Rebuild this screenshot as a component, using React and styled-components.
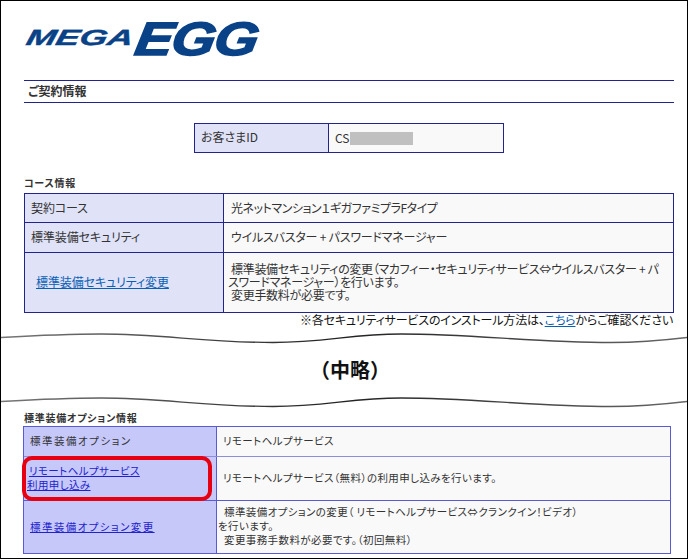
import React from "react";
import styled, { createGlobalStyle } from "styled-components";

const Global = createGlobalStyle`
  html, body { margin: 0; padding: 0; background: #fff; }
  * { box-sizing: border-box; }
`;
const Frame = styled.div`
  position: relative;
  width: 688px;
  height: 559px;
  overflow: hidden;
  border: 1px solid #000;
  background: #fff;
  font-family: "Noto Sans CJK JP", "Noto Sans", sans-serif;
  font-feature-settings: "palt";
  font-size: 12px;
  color: #333;
`;
const Logo = styled.div`
  height: 41px;
  margin: 17px 0 0 23px;
  display: flex;
  align-items: flex-end;
  font-family: "Liberation Sans", sans-serif;
  font-style: italic;
  font-weight: 700;
  color: #0a4287;
  line-height: 1;
`;
const LogoMega = styled.span`
  font-size: 22px;
  transform: scaleX(1.62) skewX(-8deg);
  transform-origin: left bottom;
  width: 108px;
  margin-bottom: 10px;
  -webkit-text-stroke: 0.4px #0a4287;
`;
const LogoEgg = styled.span`
  font-size: 47px;
  transform: scaleX(1.2) skewX(-8deg);
  transform-origin: left bottom;
  letter-spacing: -1px;
  margin-bottom: -3px;
  -webkit-text-stroke: 1.5px #0a4287;
`;
const TitleBar = styled.h1`
  margin: 21px 13px 0 23px;
  height: 23px;
  border-top: 1px solid #23238e;
  border-bottom: 1px solid #23238e;
  padding-left: 4px;
  font-size: 12px;
  line-height: 19px;
  font-weight: 700;
  color: #333;
`;
const IdTable = styled.div`
  width: 310px;
  height: 30px;
  margin: 20px 0 0 193px;
  display: grid;
  grid-template-columns: 134px 1fr;
  border: 1px solid #23238e;
`;
const IdLabel = styled.div`
  background: #e0e2f7;
  border-right: 1px solid #23238e;
  padding-left: 6px;
  line-height: 26px;
`;
const IdValue = styled.div`
  background: #f9f9f9;
  padding-left: 6px;
  line-height: 26px;
  display: flex;
  align-items: center;
`;
const Masked = styled.span`
  width: 63px;
  height: 13px;
  background: #c0c0c0;
  margin: 0 0 0 1px;
`;
const SectionHeading = styled.h2`
  margin: ${(p) => p.$top}px 0 0 ${(p) => p.$left}px;
  height: 14px;
  font-size: 10px;
  line-height: 14px;
  font-weight: 700;
  letter-spacing: ${(p) => p.$spacing}px;
  color: #333;
`;
const InfoTable = styled.div`
  width: ${(p) => p.$width}px;
  margin: ${(p) => p.$top}px 0 0 ${(p) => p.$left}px;
  border: 1px solid ${(p) => p.$line};
  border-bottom: 0;
  font-size: ${(p) => p.$size}px;
  letter-spacing: ${(p) => p.$spacing}px;
`;
const Row = styled.div`
  display: grid;
  grid-template-columns: ${(p) => p.$label}px 1fr;
  height: ${(p) => p.$height}px;
  border-bottom: 1px solid ${(p) => p.$line};
`;
const Label = styled.div`
  position: relative;
  display: flex;
  flex-direction: column;
  justify-content: center;
  align-items: flex-start;
  background: ${(p) => p.$bg};
  border-right: 1px solid ${(p) => p.$line};
  padding: 0 0 2px ${(p) => p.$pad}px;
`;
const Value = styled.div`
  display: flex;
  flex-direction: column;
  justify-content: center;
  background: #f9f9f9;
  padding: 0 0 2px ${(p) => p.$pad}px;
  letter-spacing: ${(p) => p.$spacing ?? 0.4}px;
`;
const Line = styled.div`
  line-height: ${(p) => p.$lh || 13}px;
  white-space: nowrap;
  padding-left: ${(p) => p.$indent || 0}px;
  ${(p) => (p.$spacing !== undefined ? `letter-spacing: ${p.$spacing}px;` : "")}
`;
const Link = styled.a`
  color: ${(p) => p.$color || "#0a5fb4"};
  text-decoration: underline;
  line-height: ${(p) => p.$lh || 15}px;
  white-space: nowrap;
  margin-left: ${(p) => p.$indent || 0}px;
  ${(p) => (p.$spacing !== undefined ? `letter-spacing: ${p.$spacing}px;` : "")}
`;
const Note = styled.div`
  width: 649px;
  margin: -1px 0 0 23px;
  height: 14px;
  text-align: right;
  line-height: 14px;
  letter-spacing: -0.17px;
  color: #111;
  white-space: nowrap;
`;
const WaveSvg = styled.svg`
  display: block;
  width: 686px;
  height: 11px;
  margin-top: ${(p) => p.$top}px;
`;
const Omitted = styled.div`
  margin-top: 7px;
  height: 38px;
  line-height: 38px;
  text-align: center;
  font-size: 20px;
  font-weight: 700;
  font-feature-settings: normal;
  color: #111;
  padding-left: 12px;
`;
const Highlight = styled.div`
  position: absolute;
  left: -2px;
  top: -1px;
  width: 190px;
  height: 45px;
  border: 4px solid #e60012;
  border-radius: 10px;
`;

const Wave = ({ top, id }) => (
  <WaveSvg $top={top} viewBox="0 0 686 11">
    <defs>
      <linearGradient id={id} x1="0" x2="1" y1="0" y2="0">
        <stop offset="0" stopColor="#777" />
        <stop offset="0.5" stopColor="#222" />
        <stop offset="1" stopColor="#666" />
      </linearGradient>
    </defs>
    <path
      d="M0 4.5 C35 2.5 65 1 100 1 C160 1 205 9.5 272 9.5 C325 9.5 350 1 400 1 C470 1 535 9.5 610 9.5 C640 9.5 665 7 686 4.5"
      fill="none"
      stroke={`url(#${id})`}
      strokeWidth="1.3"
    />
  </WaveSvg>
);

export default function App() {
  const dark = "#23238e";
  const blue = "#5a5ad2";
  const pale = "#e0e2f7";
  const strong = "#c6c8fa";
  return (
    <>
      <Global />
      <Frame>
        <Logo>
          <LogoMega>MEGA</LogoMega>
          <LogoEgg>EGG</LogoEgg>
        </Logo>
        <TitleBar>ご契約情報</TitleBar>
        <IdTable>
          <IdLabel>お客さまID</IdLabel>
          <IdValue>
            CS<Masked />
          </IdValue>
        </IdTable>
        <SectionHeading $top={23} $left={23} $spacing={0.7}>コース情報</SectionHeading>
        <InfoTable $width={650} $top={3} $left={23} $line={dark} $spacing={-0.1} $size={12}>
          <Row $label={199} $height={29} $line={dark}>
            <Label $bg={pale} $line={dark} $pad={6}><Line>契約コース</Line></Label>
            <Value $pad={7} $spacing={-0.45}><Line>光ネットマンション１ギガファミプラFタイプ</Line></Value>
          </Row>
          <Row $label={199} $height={30} $line={dark}>
            <Label $bg={pale} $line={dark} $pad={6}><Line>標準装備セキュリティ</Line></Label>
            <Value $pad={7} $spacing={-0.2}><Line>ウイルスバスター + パスワードマネージャー</Line></Value>
          </Row>
          <Row $label={199} $height={60} $line={dark}>
            <Label $bg={pale} $line={dark} $pad={11}><Link>標準装備セキュリティ変更</Link></Label>
            <Value $pad={4} $spacing={-0.3}>
              <Line $indent={3}>標準装備セキュリティの変更（マカフィー・セキュリティサービス⇔ウイルスバスター + パ</Line>
              <Line>スワードマネージャー）を行います。</Line>
              <Line $indent={3}>変更手数料が必要です。</Line>
            </Value>
          </Row>
        </InfoTable>
        <Note>※各セキュリティサービスのインストール方法は、<Link>こちら</Link>からご確認ください</Note>
        <Wave top={7} id="waveTop" />
        <Omitted>（中略）</Omitted>
        <Wave top={8} id="waveBottom" />
        <SectionHeading $top={3} $left={23} $spacing={0.75}>標準装備オプション情報</SectionHeading>
        <InfoTable $width={648} $top={1} $left={22} $line={blue} $spacing={0.4} $size={10.5}>
          <Row $label={193} $height={30} $line={"#8d8dda"}>
            <Label $bg={strong} $line={blue} $pad={6}><Line $spacing={1.5}>標準装備オプション</Line></Label>
            <Value $pad={6}><Line>リモートヘルプサービス</Line></Value>
          </Row>
          <Row $label={193} $height={44} $line={blue}>
            <Label $bg={strong} $line={blue} $pad={3}>
              <Link $color="#2222cc" $lh={14} $indent={2}>リモートヘルプサービス</Link>
              <Link $color="#2222cc" $lh={14}>利用申し込み</Link>
              <Highlight />
            </Label>
            <Value $pad={6}><Line>リモートヘルプサービス（無料）の利用申し込みを行います。</Line></Value>
          </Row>
          <Row $label={193} $height={53} $line={blue}>
            <Label $bg={strong} $line={blue} $pad={6}><Link $color="#2222cc" $spacing={1.4}>標準装備オプション変更</Link></Label>
            <Value $pad={1}>
              <Line $lh={14} $indent={6}>標準装備オプションの変更（ リモートヘルプサービス⇔クランクイン！ビデオ）</Line>
              <Line $lh={14}>を行います。</Line>
              <Line $lh={14} $indent={6}>変更事務手数料が必要です。（初回無料）</Line>
            </Value>
          </Row>
        </InfoTable>
      </Frame>
    </>
  );
}
